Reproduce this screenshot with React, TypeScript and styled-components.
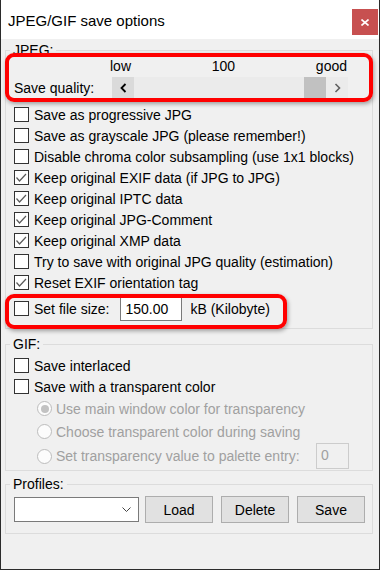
import React from "react";
import styled, { createGlobalStyle } from "styled-components";

const GlobalStyle = createGlobalStyle`
  html, body {
    margin: 0;
    padding: 0;
    background: #ffffff;
  }
  body {
    font-family: "Liberation Sans", Arial, sans-serif;
  }
`;

const Window = styled.div`
  box-sizing: border-box;
  width: 380px;
  height: 570px;
  display: flex;
  flex-direction: column;
  background: #f0f0f0;
  border: 1px solid #2b2b2b;
  border-top: none;
  color: #000;
  font-size: 14px;
`;

const TitleBar = styled.div`
  flex-shrink: 0;
  height: 39px;
  display: flex;
  align-items: flex-start;
  justify-content: space-between;
  background: #ffffff;
`;

const Title = styled.div`
  margin: 12px 0 0 7px;
  font-size: 15px;
  line-height: 18px;
`;

const CloseButton = styled.div`
  margin: 9px 1px 0 0;
  width: 26px;
  height: 26px;
  display: flex;
  align-items: center;
  justify-content: center;
  background: #c75050;
`;

const Content = styled.div`
  display: flex;
  flex-direction: column;
  padding: 0 6px 0 4px;
`;

const Group = styled.fieldset<{ $top: number; $pad: string }>`
  box-sizing: border-box;
  width: 368px;
  min-width: 0;
  margin: ${(p) => p.$top}px 0 0 0;
  padding: ${(p) => p.$pad};
  border: 1px solid #dcdcdc;
  display: flex;
  flex-direction: column;
`;

const Legend = styled.legend`
  margin-left: -4px;
  padding: 0 3px;
  font-size: 14px;
  line-height: 16px;
`;

// red annotation ring drawn over the content
const Highlight = styled.div<{ $inset: string; $width?: number; $top?: number }>`
  position: relative;
  margin-top: ${(p) => p.$top ?? 0}px;
  ${(p) => (p.$width ? `width: ${p.$width}px;` : "")}
  &::after {
    content: "";
    position: absolute;
    inset: ${(p) => p.$inset};
    border: 4px solid #ff0000;
    border-radius: 9px;
    box-shadow: 1px 2px 4px rgba(0, 0, 0, 0.35);
    pointer-events: none;
    z-index: 2;
  }
`;

const QualityPanel = styled.div`
  display: grid;
  grid-template-columns: 98px 236px;
  grid-template-rows: 16px 22px;
  row-gap: 3px;
  align-items: center;
`;

const ScaleLabels = styled.div`
  grid-column: 2;
  display: flex;
  justify-content: space-between;
  margin: 0 1px 0 -2px;
  line-height: 16px;
`;

const QualityLabel = styled.div`
  grid-column: 1;
  line-height: 22px;
`;

const Scrollbar = styled.div`
  grid-column: 2;
  display: flex;
  height: 22px;
  background: #ebebeb;
`;

const ScrollButton = styled.div<{ $pressed?: boolean }>`
  width: 22px;
  height: 22px;
  display: flex;
  align-items: center;
  justify-content: center;
  background: ${(p) => (p.$pressed ? "#dadada" : "transparent")};
`;

const Track = styled.div`
  flex: 1;
  display: flex;
  justify-content: flex-end;
`;

const Thumb = styled.div`
  width: 22px;
  background: #c1c1c1;
`;

const OptionList = styled.div`
  display: flex;
  flex-direction: column;
  margin-top: 5px;
`;

const OptionRow = styled.div`
  display: flex;
  align-items: center;
  gap: 5px;
  height: 21px;
  white-space: nowrap;
`;

const Box = styled.span`
  box-sizing: border-box;
  width: 15px;
  height: 15px;
  flex-shrink: 0;
  border: 1px solid #333333;
  background: #ffffff;
  display: flex;
`;

const FileSizeRow = styled.div`
  display: flex;
  align-items: center;
  gap: 5px;
  height: 25px;
  white-space: nowrap;
`;

const NumberInput = styled.div`
  box-sizing: border-box;
  width: 62px;
  height: 25px;
  margin: 0 3px 0 6px;
  padding: 3px 0 0 4px;
  background: #ffffff;
  border: 1px solid #7a7a7a;
  line-height: 18px;
`;

const RadioRow = styled.div`
  display: flex;
  align-items: center;
  gap: 4px;
  min-height: 23px;
  padding: 0 15px 0 23px;
  color: #a0a0a0;
  white-space: nowrap;
`;

const Radio = styled.span<{ $on?: boolean }>`
  box-sizing: border-box;
  width: 15px;
  height: 15px;
  border-radius: 50%;
  border: 1px solid #bcbcbc;
  background: #fcfcfc;
  display: flex;
  align-items: center;
  justify-content: center;
  &::after {
    content: "";
    width: 8px;
    height: 8px;
    border-radius: 50%;
    background: ${(p) => (p.$on ? "#c2c2c2" : "transparent")};
  }
`;

const SmallInput = styled.div`
  box-sizing: border-box;
  width: 33px;
  height: 26px;
  margin-left: auto;
  padding: 2px 0 0 4px;
  border: 1px solid #cccccc;
  background: #f0f0f0;
  color: #a0a0a0;
  line-height: 18px;
`;

const ProfileRow = styled.div`
  display: flex;
  align-items: center;
  gap: 8px;
  height: 27px;
`;

const Combo = styled.div`
  box-sizing: border-box;
  flex-shrink: 0;
  width: 125px;
  height: 25px;
  margin-right: -2px;
  padding-right: 7px;
  display: flex;
  align-items: center;
  justify-content: flex-end;
  background: #ffffff;
  border: 1px solid #7a7a7a;
`;

const PushButton = styled.div`
  box-sizing: border-box;
  flex-shrink: 0;
  width: 68px;
  height: 27px;
  display: flex;
  align-items: center;
  justify-content: center;
  background: #e1e1e1;
  border: 1px solid #adadad;
`;

const Check = ({ checked, label }: { checked?: boolean; label: string }) => (
  <OptionRow>
    <Box>
      {checked && (
        <svg width="13" height="13" viewBox="0 0 13 13">
          <path d="M1.5 6.5 L4.5 10 L11 3" fill="none" stroke="#5a5a5a" strokeWidth="1.2" />
        </svg>
      )}
    </Box>
    <span>{label}</span>
  </OptionRow>
);

const jpegOptions: [string, boolean][] = [
  ["Save as progressive JPG", false],
  ["Save as grayscale JPG (please remember!)", false],
  ["Disable chroma color subsampling (use 1x1 blocks)", false],
  ["Keep original EXIF data (if JPG to JPG)", true],
  ["Keep original IPTC data", true],
  ["Keep original JPG-Comment", true],
  ["Keep original XMP data", true],
  ["Try to save with original JPG quality (estimation)", false],
  ["Reset EXIF orientation tag", true],
];

export default function App() {
  return (
    <>
      <GlobalStyle />
      <Window>
        <TitleBar>
          <Title>JPEG/GIF save options</Title>
          <CloseButton>
            <svg width="8" height="7" viewBox="0 0 8 7">
              <path d="M0.5 0.5 L7.5 6.5 M7.5 0.5 L0.5 6.5" stroke="#fff" strokeWidth="1.6" />
            </svg>
          </CloseButton>
        </TitleBar>

        <Content>
          <Group $top={3} $pad="0 8px 7px 8px">
            <Legend>JPEG:</Legend>
            <Highlight $inset="-5px -9px -3px -9px">
              <QualityPanel>
                <ScaleLabels>
                  <span>low</span>
                  <span>100</span>
                  <span>good</span>
                </ScaleLabels>
                <QualityLabel>Save quality:</QualityLabel>
                <Scrollbar>
                  <ScrollButton $pressed>
                    <svg width="7" height="10" viewBox="0 0 7 10">
                      <path d="M5.5 1 L1.5 5 L5.5 9" fill="none" stroke="#000" strokeWidth="1.8" />
                    </svg>
                  </ScrollButton>
                  <Track>
                    <Thumb />
                  </Track>
                  <ScrollButton>
                    <svg width="7" height="10" viewBox="0 0 7 10">
                      <path d="M1.5 1 L5.5 5 L1.5 9" fill="none" stroke="#606060" strokeWidth="1.6" />
                    </svg>
                  </ScrollButton>
                </Scrollbar>
              </QualityPanel>
            </Highlight>

            <OptionList>
              {jpegOptions.map(([label, on]) => (
                <Check key={label} label={label} checked={on} />
              ))}
            </OptionList>

            <Highlight $inset="-2px -9px -8px -9px" $width={264} $top={3}>
              <FileSizeRow>
                <Box />
                <span>Set file size:</span>
                <NumberInput>150.00</NumberInput>
                <span>kB (Kilobyte)</span>
              </FileSizeRow>
            </Highlight>
          </Group>

          <Group $top={7} $pad="3px 8px 1px 8px">
            <Legend>GIF:</Legend>
            <Check label="Save interlaced" />
            <Check label="Save with a transparent color" />
            <RadioRow>
              <Radio $on />
              <span>Use main window color for transparency</span>
            </RadioRow>
            <RadioRow>
              <Radio />
              <span>Choose transparent color during saving</span>
            </RadioRow>
            <RadioRow>
              <Radio />
              <span>Set transparency value to palette entry:</span>
              <SmallInput>0</SmallInput>
            </RadioRow>
          </Group>

          <Group $top={5} $pad="4px 8px 10px 8px">
            <Legend>Profiles:</Legend>
            <ProfileRow>
              <Combo>
                <svg width="9" height="5" viewBox="0 0 9 5">
                  <path d="M0.5 0.5 L4.5 4.5 L8.5 0.5" fill="none" stroke="#444" strokeWidth="1" />
                </svg>
              </Combo>
              <PushButton>Load</PushButton>
              <PushButton>Delete</PushButton>
              <PushButton>Save</PushButton>
            </ProfileRow>
          </Group>
        </Content>
      </Window>
    </>
  );
}
